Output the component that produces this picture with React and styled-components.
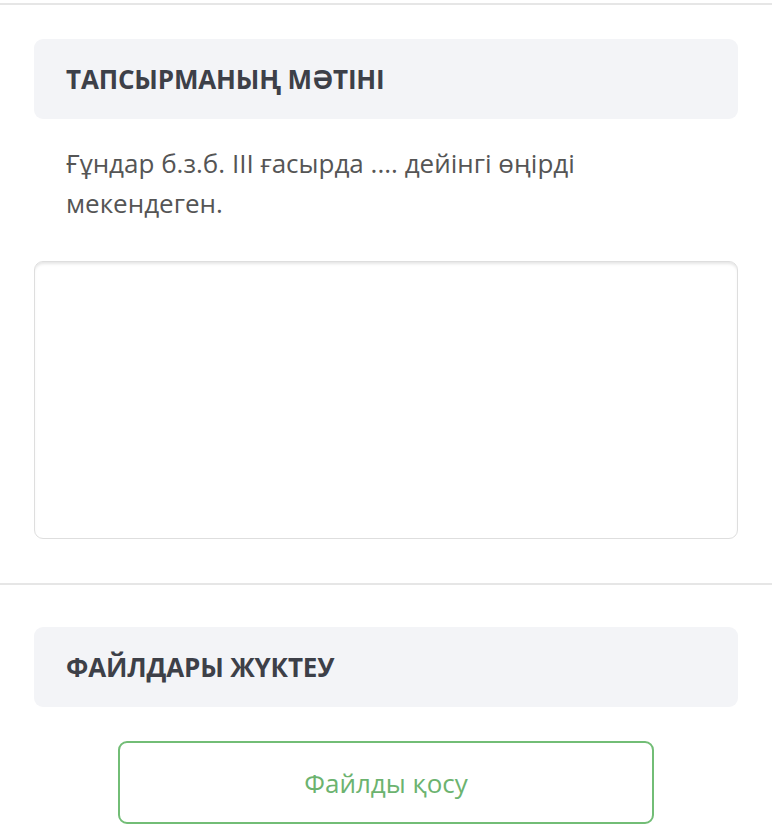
import React from "react";
import styled, { createGlobalStyle } from "styled-components";

const GlobalStyle = createGlobalStyle`
  html, body {
    margin: 0;
    padding: 0;
    background: #ffffff;
  }
  body {
    font-family: "Open Sans", "Noto Sans", sans-serif;
  }
`;

const Page = styled.div`
  width: 772px;
  height: 828px;
  overflow: hidden;
  background: #fff;
  padding-top: 3px;
  box-sizing: border-box;
`;

const TopRule = styled.div`
  height: 2px;
  background: #e6e6e6;
`;

const Section = styled.section`
  padding: ${(p) => p.$top}px 34px 0;
`;

const SectionHead = styled.div`
  height: 80px;
  display: flex;
  align-items: center;
  padding: 0 32px;
  background: #f3f4f7;
  border-radius: 9px;
  box-sizing: border-box;
`;

const SectionTitle = styled.h2`
  margin: 0;
  font-size: 26px;
  font-weight: 700;
  color: #3d4048;
  letter-spacing: -0.15px;
`;

const TaskText = styled.p`
  margin: 24px 32px 0;
  font-size: 26px;
  line-height: 40px;
  color: #555;
`;

const Answer = styled.div`
  margin-top: 38px;
  height: 278px;
  border: 1.5px solid #dedede;
  border-radius: 9px;
  box-shadow: inset 0 3px 3px -1px rgba(0, 0, 0, 0.1);
  box-sizing: border-box;
`;

const Divider = styled.hr`
  margin: 44px 0 0;
  border: 0;
  border-top: 2px solid #e6e6e6;
`;

const ButtonRow = styled.div`
  display: flex;
  justify-content: center;
  padding: 34px 0 0;
`;

const UploadButton = styled.button`
  width: 536px;
  height: 83px;
  background: #fff;
  border: 2px solid #72bd76;
  border-radius: 9px;
  color: #6cb36f;
  font-family: "Open Sans", "Noto Sans", sans-serif;
  font-size: 26px;
  cursor: pointer;
`;

export default function App() {
  return (
    <Page>
      <GlobalStyle />
      <TopRule />
      <Section $top={34}>
        <SectionHead>
          <SectionTitle>ТАПСЫРМАНЫҢ МӘТІНІ</SectionTitle>
        </SectionHead>
        <TaskText>
          Ғұндар б.з.б. III ғасырда .... дейінгі өңірді мекендеген.
        </TaskText>
        <Answer />
      </Section>
      <Divider />
      <Section $top={42}>
        <SectionHead>
          <SectionTitle>ФАЙЛДАРЫ ЖҮКТЕУ</SectionTitle>
        </SectionHead>
      </Section>
      <ButtonRow>
        <UploadButton>Файлды қосу</UploadButton>
      </ButtonRow>
    </Page>
  );
}
